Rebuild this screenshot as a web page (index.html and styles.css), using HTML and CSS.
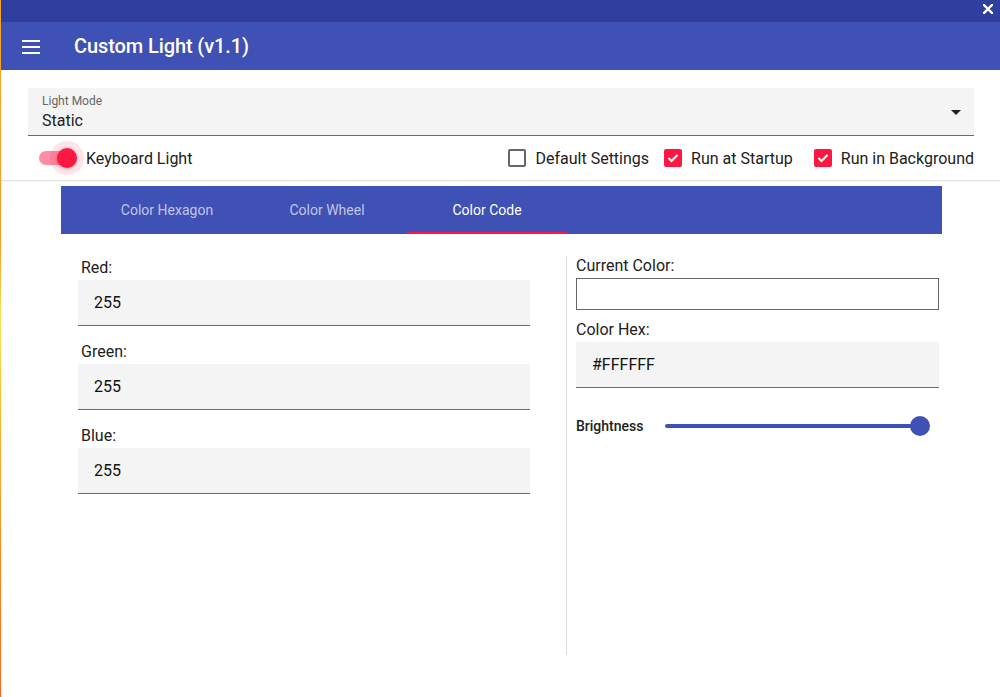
FILE: index.html
```html
<!DOCTYPE html>
<html>
<head>
<meta charset="utf-8">
<title>Custom Light</title>
<link rel="stylesheet" href="styles.css">
</head>
<body>
<div class="window">
  <div class="titlebar">
    <svg class="close" width="10" height="10" viewBox="0 0 10 10"><path d="M1 1L9 9M9 1L1 9" stroke="#fff" stroke-width="2.4" stroke-linecap="square"/></svg>
  </div>
  <div class="appbar">
    <svg class="menu" width="18" height="14" viewBox="0 0 18 14"><rect x="0" y="0" width="18" height="2" fill="#fff"/><rect x="0" y="6" width="18" height="2" fill="#fff"/><rect x="0" y="12" width="18" height="2" fill="#fff"/></svg>
    <span class="apptitle">Custom Light (v1.1)</span>
  </div>

  <div class="settings">
    <div class="select">
      <div class="select-label">Light Mode</div>
      <div class="select-value">Static</div>
      <svg class="select-arrow" width="10" height="5" viewBox="0 0 10 5"><path d="M0 0H10L5 5Z" fill="#222"/></svg>
    </div>
    <div class="options">
      <div class="switch">
        <span class="track"></span>
        <span class="halo"></span>
        <span class="thumb"></span>
      </div>
      <span class="switch-label">Keyboard Light</span>
      <div class="checks">
        <label class="check"><span class="box"></span>Default Settings</label>
        <label class="check"><span class="box on"><svg width="12" height="10" viewBox="0 0 12 10"><path d="M1.5 5L4.5 8L10.5 2" stroke="#fff" stroke-width="2" fill="none"/></svg></span>Run at Startup</label>
        <label class="check last"><span class="box on"><svg width="12" height="10" viewBox="0 0 12 10"><path d="M1.5 5L4.5 8L10.5 2" stroke="#fff" stroke-width="2" fill="none"/></svg></span>Run in Background</label>
      </div>
    </div>
  </div>
  <div class="rule"></div>

  <div class="tabs">
    <div class="tab">Color Hexagon</div>
    <div class="tab">Color Wheel</div>
    <div class="tab active">Color Code</div>
  </div>

  <div class="content">
    <div class="col-left">
      <div class="field">
        <div class="label">Red:</div>
        <div class="input">255</div>
      </div>
      <div class="field">
        <div class="label">Green:</div>
        <div class="input">255</div>
      </div>
      <div class="field">
        <div class="label">Blue:</div>
        <div class="input">255</div>
      </div>
    </div>
    <div class="vdivider"></div>
    <div class="col-right">
      <div class="rlabel">Current Color:</div>
      <div class="swatch"></div>
      <div class="rlabel hex-label">Color Hex:</div>
      <div class="input">#FFFFFF</div>
      <div class="brightness">
        <span class="b-label">Brightness</span>
        <div class="slider">
          <span class="s-track"></span>
          <span class="s-thumb"></span>
        </div>
      </div>
    </div>
  </div>
</div>
</body>
</html>
```

FILE: styles.css
```css
* { box-sizing: border-box; }
html, body {
  margin: 0;
  padding: 0;
  width: 1000px;
  height: 697px;
  overflow: hidden;
  background: #fff;
  font-family: Roboto, "Noto Sans", "Liberation Sans", sans-serif;
  color: #212121;
}
.window {
  width: 1000px;
  height: 697px;
  border-left: 1px solid #ffa726;
  border-image: linear-gradient(to bottom, #f5a623 0%, #ff9d1f 35%, #ffe24a 46%, #ffb627 60%, #ff8a1c 80%, #ff6420 100%) 1;
}
.titlebar {
  height: 22px;
  background: #303f9f;
  display: flex;
  justify-content: flex-end;
  align-items: flex-start;
  padding: 4px 7px 0 0;
}
.appbar {
  height: 48px;
  background: #3f51b5;
  display: flex;
  align-items: center;
  padding-left: 21px;
  color: #fff;
}
.menu { display: block; margin-top: 1px; }
.apptitle {
  margin-left: 34px;
  font-size: 20px;
  font-weight: 500;
  letter-spacing: -0.1px;
}

.settings {
  padding: 18px 26px 0 27px;
}
.select {
  position: relative;
  height: 48px;
  background: #f4f4f4;
  border-bottom: 1px solid #6b6b6b;
  padding: 6px 14px 0;
}
.select-label {
  font-size: 12px;
  line-height: 14px;
  color: #666;
}
.select-value {
  margin-top: 3px;
  font-size: 16px;
  line-height: 20px;
  color: #212121;
}
.select-arrow {
  position: absolute;
  right: 13px;
  top: 22px;
}
.options {
  height: 44px;
  display: flex;
  align-items: center;
  padding-left: 10px;
}
.switch {
  position: relative;
  width: 40px;
  height: 22px;
}
.track {
  position: absolute;
  left: 1px;
  top: 4px;
  width: 34px;
  height: 14px;
  border-radius: 7px;
  background: #ff8ca3;
}
.halo {
  position: absolute;
  left: 12px;
  top: -6px;
  width: 34px;
  height: 34px;
  border-radius: 50%;
  background: rgba(255, 23, 68, 0.12);
}
.thumb {
  position: absolute;
  left: 19px;
  top: 1px;
  width: 20px;
  height: 20px;
  border-radius: 50%;
  background: #ff1744;
  box-shadow: 0 1px 3px rgba(0,0,0,0.3);
}
.switch-label {
  margin-left: 8px;
  font-size: 16px;
}
.checks {
  margin-left: auto;
  display: flex;
  align-items: center;
  gap: 15px;
}
.check {
  display: flex;
  align-items: center;
  font-size: 16px;
  gap: 9px;
}
.check.last { margin-left: 6px; }
.box {
  width: 18px;
  height: 18px;
  border: 2px solid #666;
  border-radius: 2px;
  display: flex;
  align-items: center;
  justify-content: center;
}
.box.on {
  background: #ff1744;
  border-color: #ff1744;
}
.box svg { display: block; }
.rule {
  height: 2px;
  border-top: 1px solid #e2e2e2;
  background: #f6f6f6;
}

.tabs {
  margin: 4px 0 0 60px;
  width: 881px;
  height: 48px;
  background: #3f51b5;
  display: flex;
  padding-left: 26px;
}
.tab {
  width: 160px;
  height: 48px;
  display: flex;
  align-items: center;
  justify-content: center;
  font-size: 14px;
  color: rgba(255,255,255,0.68);
  border-bottom: 2px solid transparent;
  padding-top: 2px;
}
.tab.active {
  color: #fff;
  border-bottom-color: #ff1744;
}

.content {
  display: flex;
  padding: 22px 0 0 77px;
}
.col-left {
  width: 452px;
}
.field + .field { margin-top: 14px; }
.label {
  font-size: 16px;
  line-height: 22px;
  padding-left: 3px;
  margin-bottom: 2px;
  color: #212121;
  padding-top: 1px;
  height: 22px;
}
.input {
  height: 46px;
  background: #f4f4f4;
  border-bottom: 1px solid #6b6b6b;
  font-size: 16px;
  display: flex;
  align-items: center;
  padding-left: 16px;
  color: #111;
}
.vdivider {
  margin-left: 36px;
  width: 1px;
  height: 399px;
  background: #dcdcdc;
}
.col-right {
  margin-left: 9px;
  width: 363px;
}
.rlabel {
  font-size: 16px;
  line-height: 20px;
  padding-left: 0;
  margin-bottom: 2px;
}
.swatch {
  height: 32px;
  border: 1px solid #666;
  background: #fff;
}
.hex-label { margin-top: 10px; }
.brightness {
  margin-top: 26px;
  height: 24px;
  display: flex;
  align-items: center;
}
.b-label {
  font-size: 14px;
  font-weight: 500;
  color: #222;
}
.slider {
  position: relative;
  margin-left: 22px;
  width: 265px;
  height: 20px;
}
.s-track {
  position: absolute;
  left: 0;
  right: 10px;
  top: 8px;
  height: 4px;
  border-radius: 2px;
  background: #3f51b5;
}
.s-thumb {
  position: absolute;
  right: 0;
  top: 0;
  width: 20px;
  height: 20px;
  border-radius: 50%;
  background: #3f51b5;
}
```
